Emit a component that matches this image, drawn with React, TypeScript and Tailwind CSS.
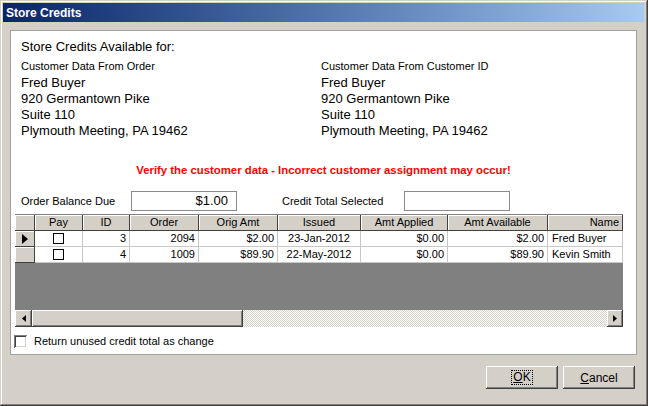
import React from "react";

const raised =
  "shadow-[inset_-1px_-1px_0_#404040,inset_1px_1px_0_#ffffff,inset_-2px_-2px_0_#808080,inset_2px_2px_0_#d4d0c8]";
const sunken =
  "shadow-[inset_1px_1px_0_#808080,inset_-1px_-1px_0_#ffffff,inset_2px_2px_0_#404040,inset_-2px_-2px_0_#d4d0c8]";

type Col = { label: string; w: string; head: string; cell: string };

const cols: Col[] = [
  { label: "Pay", w: "w-[48px]", head: "justify-center", cell: "justify-center" },
  { label: "ID", w: "w-[47px]", head: "justify-center", cell: "justify-end pr-[3px]" },
  { label: "Order", w: "w-[69px]", head: "justify-center", cell: "justify-end pr-[3px]" },
  { label: "Orig Amt", w: "w-[79px]", head: "justify-center", cell: "justify-end pr-[3px]" },
  { label: "Issued", w: "w-[83px]", head: "justify-center", cell: "justify-center" },
  { label: "Amt Applied", w: "w-[87px]", head: "justify-center", cell: "justify-end pr-[3px]" },
  { label: "Amt Available", w: "w-[100px]", head: "justify-center", cell: "justify-end pr-[3px]" },
  { label: "Name", w: "w-[75px]", head: "justify-end pr-[3px]", cell: "justify-start pl-[4px]" },
];

const rows = [
  ["", "3", "2094", "$2.00", "23-Jan-2012", "$0.00", "$2.00", "Fred Buyer"],
  ["", "4", "1009", "$89.90", "22-May-2012", "$0.00", "$89.90", "Kevin Smith"],
];

function Address() {
  return (
    <div className="flex flex-col">
      <span className="text-[13px] leading-[16px]">Fred Buyer</span>
      <span className="text-[13px] leading-[16px]">920 Germantown Pike</span>
      <span className="text-[13px] leading-[16px]">Suite 110</span>
      <span className="text-[13px] leading-[16px]">Plymouth Meeting, PA 19462</span>
    </div>
  );
}

function Grid() {
  return (
    <div className="ml-[4px] w-[608px] flex flex-col text-[11px]">
      <div className="flex h-[17px] border-t border-[#808080] bg-[#d4d0c8]">
        <div className="w-[20px] border-r border-b border-[#404040] shadow-[inset_1px_1px_0_#ffffff]" />
        {cols.map((c) => (
          <div
            key={c.label}
            className={`${c.w} ${c.head} flex items-center border-r border-b border-[#404040] shadow-[inset_1px_1px_0_#ffffff] leading-none`}
          >
            {c.label}
          </div>
        ))}
      </div>
      {rows.map((r, i) => (
        <div key={i} className="flex h-[16px] bg-white">
          <div className="w-[20px] flex items-center justify-center bg-[#d4d0c8] border-r border-b border-[#404040] shadow-[inset_1px_1px_0_#ffffff]">
            {i === 0 && (
              <svg width="6" height="10" viewBox="0 0 6 10">
                <path d="M0 0 L6 5 L0 10 Z" fill="#000" />
              </svg>
            )}
          </div>
          {cols.map((c, j) => (
            <div
              key={c.label}
              className={`${c.w} ${c.cell} flex items-center border-r border-b border-[#c8c8c8] leading-none`}
            >
              {j === 0 ? (
                <div className="w-[11px] h-[11px] border border-black bg-white" />
              ) : (
                r[j]
              )}
            </div>
          ))}
        </div>
      ))}
      <div className="h-[47px] bg-[#808080]" />
      <div className="flex h-[17px]">
        <div className={`w-[17px] bg-[#d4d0c8] ${raised} flex items-center justify-center`}>
          <svg width="4" height="7" viewBox="0 0 4 7">
            <path d="M4 0 L0 3.5 L4 7 Z" fill="#000" />
          </svg>
        </div>
        <div className={`w-[211px] bg-[#d4d0c8] ${raised}`} />
        <div className="flex-1 bg-[repeating-conic-gradient(#d4d0c8_0%_25%,#ffffff_0%_50%)] bg-[length:2px_2px]" />
        <div className={`w-[16px] bg-[#d4d0c8] ${raised} flex items-center justify-center`}>
          <svg width="4" height="7" viewBox="0 0 4 7">
            <path d="M0 0 L4 3.5 L0 7 Z" fill="#000" />
          </svg>
        </div>
      </div>
    </div>
  );
}

export default function App() {
  return (
    <div
      className={`w-[648px] h-[406px] bg-[#d4d0c8] pt-[3px] pl-[3px] pr-[4px] font-['Liberation_Sans',Arial,sans-serif] text-black shadow-[inset_-1px_-1px_0_#404040,inset_1px_1px_0_#d4d0c8,inset_-2px_-2px_0_#808080,inset_2px_2px_0_#ffffff] overflow-hidden`}
    >
      <div className="h-[19px] bg-gradient-to-r from-[#0a246a] to-[#a6caf0] flex items-center pl-[3px] text-white font-bold text-[12px]">
        Store Credits
      </div>

      <div className="mt-[8px] ml-[7px] w-[627px] h-[325px] bg-white border border-[#a0a0a0] flex flex-col">
        <div className="pl-[10px] pt-[8px] text-[13px] leading-[16px]">Store Credits Available for:</div>

        <div className="flex pl-[10px] mt-[4px]">
          <div className="w-[300px] flex flex-col">
            <span className="text-[11px] leading-[14px] mb-[2px]">Customer Data From Order</span>
            <Address />
          </div>
          <div className="flex flex-col">
            <span className="text-[11px] leading-[14px] mb-[2px]">Customer Data From Customer ID</span>
            <Address />
          </div>
        </div>

        <div className="mt-[24px] text-center text-[11.35px] leading-[14px] font-bold text-[#ff0000]">
          Verify the customer data - Incorrect customer assignment may occur!
        </div>

        <div className="flex items-center pl-[10px] mt-[14px] text-[11px]">
          <span className="w-[110px]">Order Balance Due</span>
          <div className="w-[106px] h-[20px] border border-[#8a8a8a] flex items-center justify-end pr-[8px] text-[13px]">
            $1.00
          </div>
          <span className="ml-[45px] w-[122px]">Credit Total Selected</span>
          <div className="w-[106px] h-[20px] border border-[#8a8a8a]" />
        </div>

        <div className="mt-[3px]">
          <Grid />
        </div>

        <div className="flex items-center mt-[6px] ml-[3px] text-[11px]">
          <div className={`w-[13px] h-[13px] bg-white ${sunken}`} />
          <span className="ml-[7px]">Return unused credit total as change</span>
        </div>
      </div>

      <div className="flex justify-end gap-[5px] mt-[11px] pr-[9px] text-[12px]">
        <button className={`w-[72px] h-[23px] bg-[#d4d0c8] ${raised} flex items-center justify-center`}>
          <span className="border border-dotted border-black px-[1px] leading-[13px]">
            <span className="underline">O</span>K
          </span>
        </button>
        <button className={`w-[72px] h-[23px] bg-[#d4d0c8] ${raised} flex items-center justify-center`}>
          <span>
            <span className="underline">C</span>ancel
          </span>
        </button>
      </div>
    </div>
  );
}
